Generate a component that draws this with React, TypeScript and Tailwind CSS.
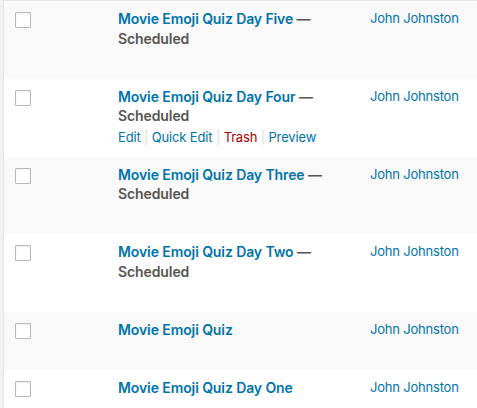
import React from "react";

type Row = { title: string; scheduled?: boolean; actions?: boolean };

const rows: Row[] = [
  { title: "Movie Emoji Quiz Day Five", scheduled: true },
  { title: "Movie Emoji Quiz Day Four", scheduled: true, actions: true },
  { title: "Movie Emoji Quiz Day Three", scheduled: true },
  { title: "Movie Emoji Quiz Day Two", scheduled: true },
  { title: "Movie Emoji Quiz" },
  { title: "Movie Emoji Quiz Day One" },
];

function Sep() {
  return <span className="text-[#dddddd]"> | </span>;
}

export default function App() {
  return (
    <div
      className="w-[477px] h-[408px] overflow-hidden bg-[#f1f1f1] pl-[3px]"
      style={{ fontFamily: 'Inter, "Liberation Sans", sans-serif' }}
    >
      <div className="border-t border-l border-[#e5e5e5] bg-white">
        {rows.map((r, i) => (
          <div
            key={i}
            className={`grid grid-cols-[104px_252px_1fr] ${i % 2 === 0 ? "bg-[#f9f9f9]" : "bg-white"}`}
          >
            <div className="pt-[11px] pl-[11px]">
              <div className="w-4 h-4 border border-[#b4b9be] bg-white rounded-[1px] shadow-[inset_0_1px_2px_rgba(0,0,0,0.07)]" />
            </div>
            <div className="px-[10px] pt-[8px] pb-[8px]">
              <div className="text-[14px] leading-[19.5px] font-semibold tracking-[-0.1px]">
                <span className="text-[#0073aa]">{r.title}</span>
                {r.scheduled && (
                  <span className="text-[#555555]"> — Scheduled</span>
                )}
              </div>
              <div
                className={`h-[22.75px] pt-[2px] text-[13px] leading-[19.5px] tracking-[-0.15px] text-[#0073aa] ${r.actions ? "" : "invisible"}`}
              >
                <span>Edit</span>
                <Sep />
                <span>Quick Edit</span>
                <Sep />
                <span className="text-[#a00]">Trash</span>
                <Sep />
                <span>Preview</span>
              </div>
            </div>
            <div className="px-[10px] pt-[8px] text-[13px] leading-[19.5px] tracking-[-0.2px] text-[#0073aa] whitespace-nowrap">
              John Johnston
            </div>
          </div>
        ))}
      </div>
    </div>
  );
}
